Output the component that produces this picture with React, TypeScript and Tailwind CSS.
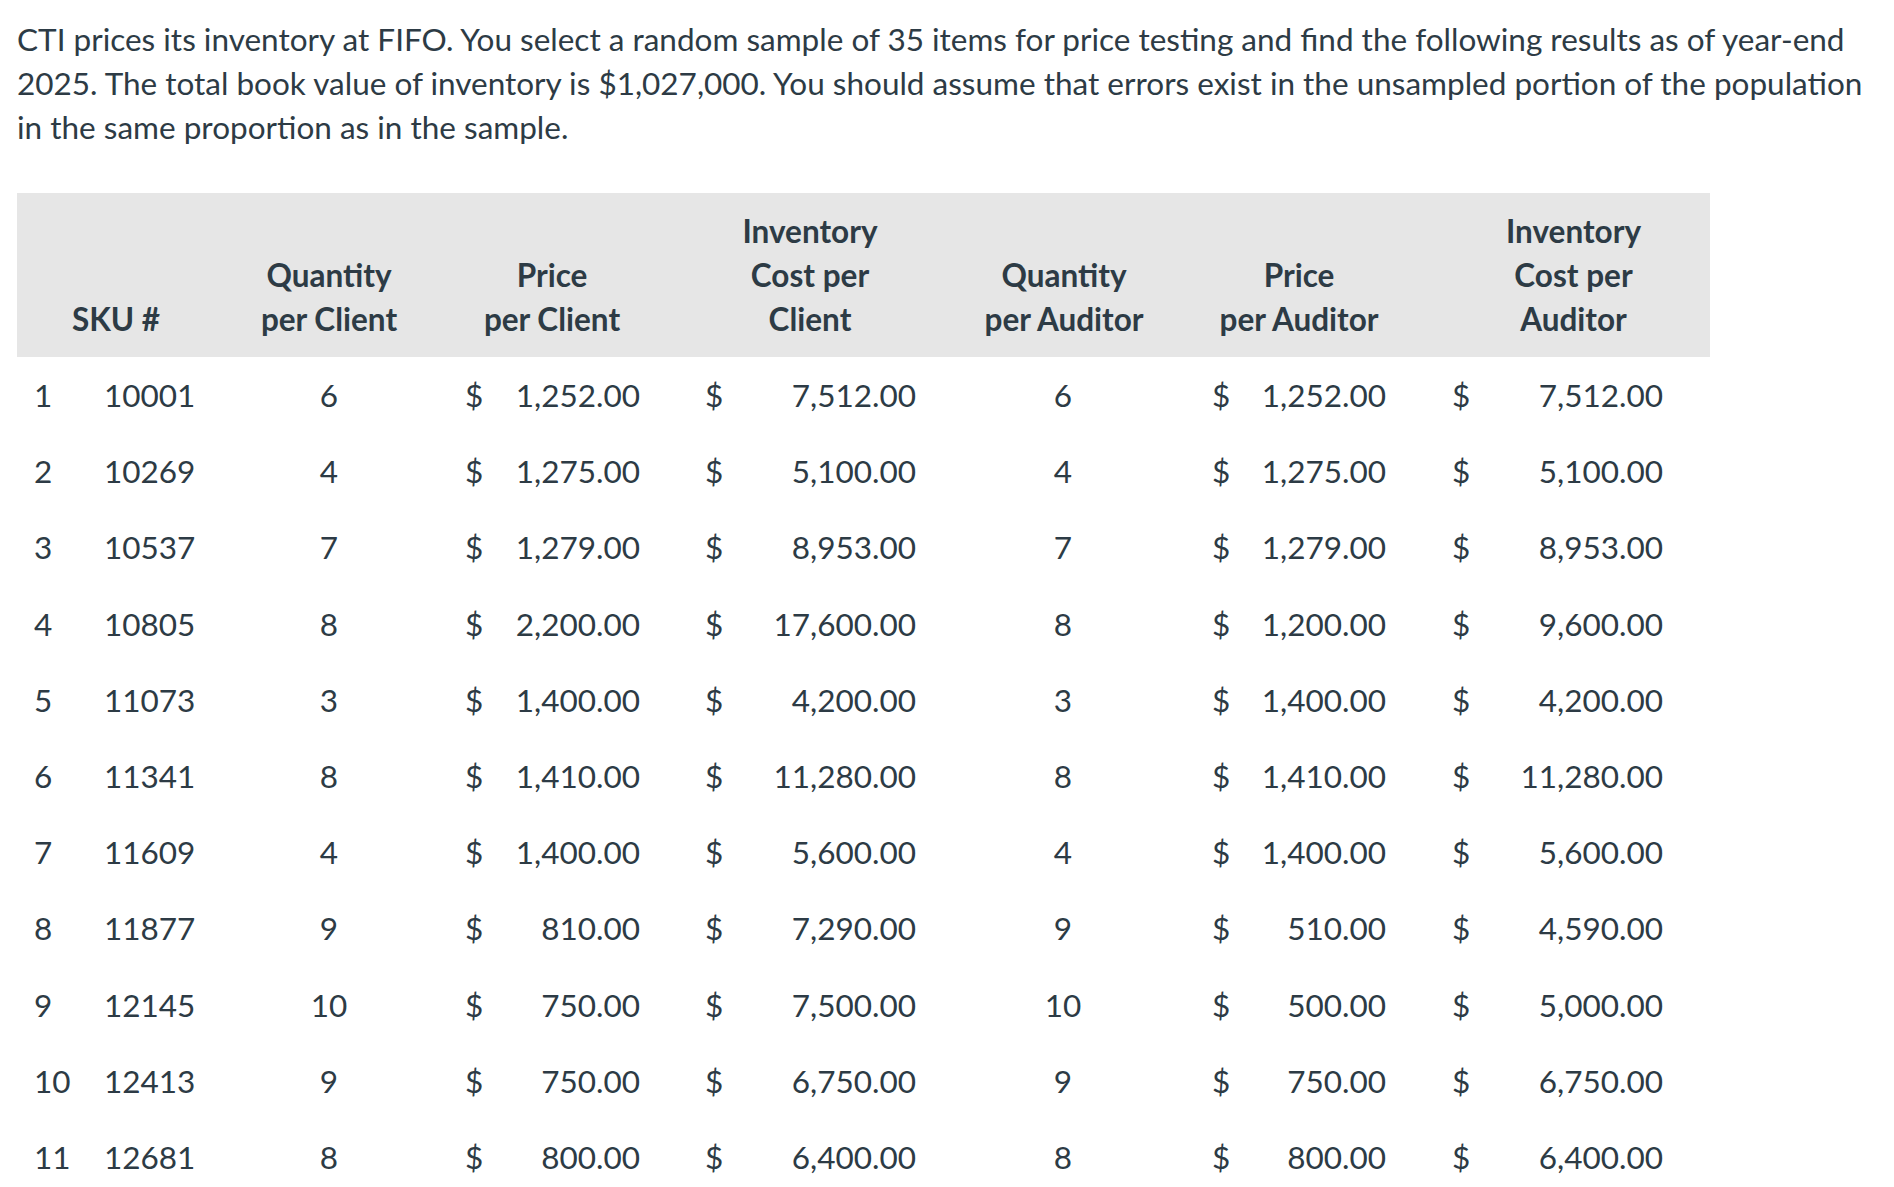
import React from 'react'

type Row = {
  n: number
  sku: string
  qc: string
  pc: string
  ic: string
  qa: string
  pa: string
  ia: string
}

const rows: Row[] = [
  { n: 1, sku: '10001', qc: '6', pc: '1,252.00', ic: '7,512.00', qa: '6', pa: '1,252.00', ia: '7,512.00' },
  { n: 2, sku: '10269', qc: '4', pc: '1,275.00', ic: '5,100.00', qa: '4', pa: '1,275.00', ia: '5,100.00' },
  { n: 3, sku: '10537', qc: '7', pc: '1,279.00', ic: '8,953.00', qa: '7', pa: '1,279.00', ia: '8,953.00' },
  { n: 4, sku: '10805', qc: '8', pc: '2,200.00', ic: '17,600.00', qa: '8', pa: '1,200.00', ia: '9,600.00' },
  { n: 5, sku: '11073', qc: '3', pc: '1,400.00', ic: '4,200.00', qa: '3', pa: '1,400.00', ia: '4,200.00' },
  { n: 6, sku: '11341', qc: '8', pc: '1,410.00', ic: '11,280.00', qa: '8', pa: '1,410.00', ia: '11,280.00' },
  { n: 7, sku: '11609', qc: '4', pc: '1,400.00', ic: '5,600.00', qa: '4', pa: '1,400.00', ia: '5,600.00' },
  { n: 8, sku: '11877', qc: '9', pc: '810.00', ic: '7,290.00', qa: '9', pa: '510.00', ia: '4,590.00' },
  { n: 9, sku: '12145', qc: '10', pc: '750.00', ic: '7,500.00', qa: '10', pa: '500.00', ia: '5,000.00' },
  { n: 10, sku: '12413', qc: '9', pc: '750.00', ic: '6,750.00', qa: '9', pa: '750.00', ia: '6,750.00' },
  { n: 11, sku: '12681', qc: '8', pc: '800.00', ic: '6,400.00', qa: '8', pa: '800.00', ia: '6,400.00' },
]

function Money({ value, className }: { value: string; className: string }) {
  return (
    <div className={`flex items-center justify-between ${className}`}>
      <span>$</span>
      <span>{value}</span>
    </div>
  )
}

export default function App() {
  return (
    <div
      className="min-h-screen bg-white text-[#2d3b45] text-[31.5px] leading-[44px]"
      style={{ fontFamily: 'Lato, "Noto Sans", sans-serif' }}
    >
      <p className="pt-[17px] pl-[17px] pr-[8px]">
        CTI prices its inventory at FIFO. You select a random sample of 35 items for price testing and find the following
        results as of year-end 2025. The total book value of inventory is $1,027,000. You should assume that errors exist
        in the unsampled portion of the population in the same proportion as in the sample.
      </p>

      <div className="mt-[44px] ml-[17px] w-[1693px]">
        {/* header */}
        <div className="grid grid-cols-[202px_220px_226px_290px_218px_252px_285px] items-end bg-[#e6e6e6] pt-[16px] pb-[16px] font-bold text-center">
          <div className="pr-[4px]">SKU #</div>
          <div>Quantity<br />per Client</div>
          <div>Price<br />per Client</div>
          <div>Inventory<br />Cost per<br />Client</div>
          <div>Quantity<br />per Auditor</div>
          <div>Price<br />per Auditor</div>
          <div className="pl-[12px]">Inventory<br />Cost per<br />Auditor</div>
        </div>

        {/* body */}
        {rows.map((r) => (
          <div
            key={r.n}
            className="grid grid-cols-[69px_164px_158px_250px_276px_258px_212px_277px] items-center h-[76.2px]"
          >
            <div className="pl-[17px]">{r.n}</div>
            <div className="pl-[18px]">{r.sku}</div>
            <div className="text-center">{r.qc}</div>
            <Money value={r.pc} className="pl-[57px] pr-[18px]" />
            <Money value={r.ic} className="pl-[47px] pr-[18px]" />
            <div className="text-center">{r.qa}</div>
            <Money value={r.pa} className="pl-[20px] pr-[18px]" />
            <Money value={r.ia} className="pl-[48px] pr-[18px]" />
          </div>
        ))}
      </div>
    </div>
  )
}
